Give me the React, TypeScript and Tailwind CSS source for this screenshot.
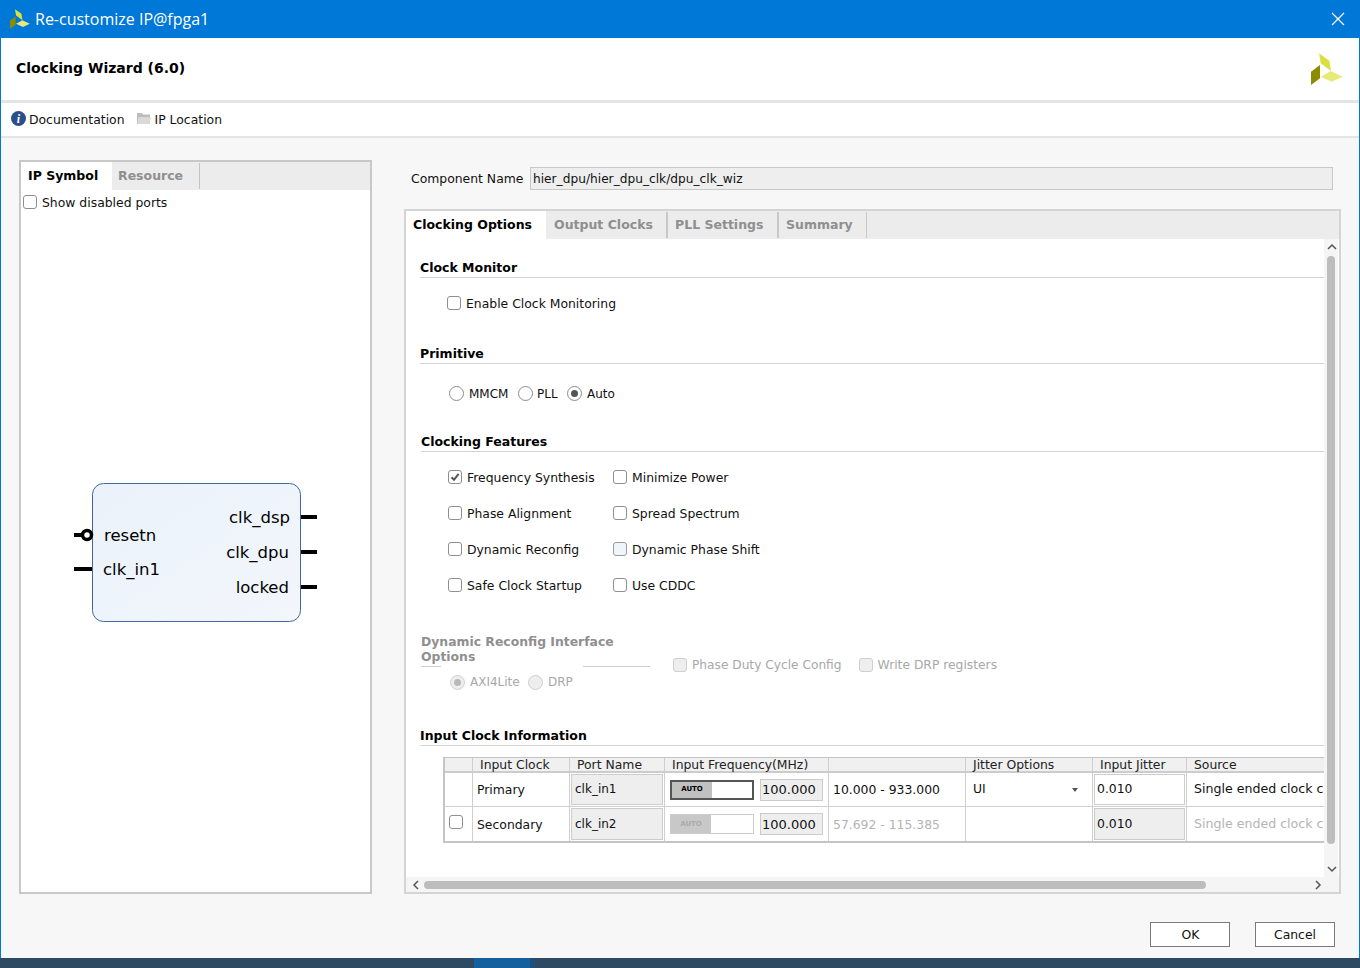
import type { ReactNode } from "react";

function XilinxLogo({ size }: { size: number }) {
  return (
    <svg width={size} height={size} viewBox="0 0 32 32" className="shrink-0">
      <polygon points="8,0.3 18.3,7.7 20,18 9.7,10.3" fill="#dbe040" />
      <polygon points="0,18.7 9,12 9,25.3 0,32" fill="#8b8c00" />
      <polygon points="9.7,23.7 19.7,18 31.7,23.7 20.7,28.7" fill="#e6ea78" />
    </svg>
  );
}

function Check({ checked, disabled, tint }: { checked?: boolean; disabled?: boolean; tint?: boolean }) {
  return (
    <span
      className={`flex h-[14px] w-[14px] shrink-0 items-center justify-center rounded-[3px] border-[1.5px] ${
        disabled ? "border-[#cfcfcf] bg-[#eeeeee]" : tint ? "border-[#9a9a9a] bg-[#f0f5fb]" : "border-[#8f8f8f] bg-white"
      }`}
    >
      {checked && (
        <svg width="10" height="10" viewBox="0 0 10 10">
          <path d="M1.5 5.2 L4 7.8 L8.6 1.8" fill="none" stroke="#555" strokeWidth="2" />
        </svg>
      )}
    </span>
  );
}

function Radio({ checked, disabled }: { checked?: boolean; disabled?: boolean }) {
  return (
    <span
      className={`flex h-[15px] w-[15px] shrink-0 items-center justify-center rounded-full border ${
        disabled ? "border-[#cfcfcf] bg-[#eeeeee]" : "border-[#8c8c8c] bg-white"
      }`}
    >
      {checked && <span className={`h-[7px] w-[7px] rounded-full ${disabled ? "bg-[#b8b8b8]" : "bg-[#555555]"}`} />}
    </span>
  );
}

function Heading({ children }: { children: ReactNode }) {
  return <div className="h-5 border-b border-[#d4d4d4] text-[12.5px] leading-[20px] font-bold text-black">{children}</div>;
}

function CheckRow({ label, checked, tint }: { label: string; checked?: boolean; tint?: boolean }) {
  return (
    <div className="flex h-9 items-center gap-[5px]">
      <Check checked={checked} tint={tint} />
      <span className="pt-[2px]">{label}</span>
    </div>
  );
}

function AutoToggle({ disabled }: { disabled?: boolean }) {
  return (
    <div className={`flex h-5 w-[84px] ${disabled ? "border border-[#cccccc]" : "border-2 border-[#555555]"} bg-white`}>
      <div
        className={`flex w-10 items-center justify-center text-[7px] font-bold ${
          disabled ? "bg-[#c8c8c8] text-[#aaaaaa]" : "bg-[#c0c0c0] text-black"
        }`}
      >
        AUTO
      </div>
    </div>
  );
}

function ReadBox({ children, className }: { children: ReactNode; className: string }) {
  return <div className={`border border-[#cccccc] ${className}`}>{children}</div>;
}

function Chevron({ d, className }: { d: string; className?: string }) {
  return (
    <svg width="10" height="10" viewBox="0 0 10 10" className={className}>
      <path d={d} fill="none" stroke="#555" strokeWidth="1.5" />
    </svg>
  );
}

const cell = "flex items-center border-r border-[#cfcfcf]";
const head = "flex items-center border-r border-[#cfcfcf] bg-[#f0f0f0] border-b-2 border-b-[#cccccc] pt-[2px] text-[#222]";
const rowLine = "border-b border-b-[#cfcfcf]";

function ClockTable() {
  return (
    <div className="ml-[23px] mt-[11px] overflow-hidden border-t border-l-2 border-b-2 border-[#c4c4c4]">
      <div className="grid w-[1000px] grid-cols-[28px_97px_95px_164px_137px_127px_94px_258px] grid-rows-[15px_34px_34px]">
        <div className={head} />
        <div className={`${head} pl-[7px]`}>Input Clock</div>
        <div className={`${head} pl-[7px]`}>Port Name</div>
        <div className={`${head} pl-[7px]`}>Input Frequency(MHz)</div>
        <div className={head} />
        <div className={`${head} pl-[7px]`}>Jitter Options</div>
        <div className={`${head} pl-[7px]`}>Input Jitter</div>
        <div className={`${head} pl-[7px]`}>Source</div>

        <div className={`${cell} ${rowLine}`} />
        <div className={`${cell} ${rowLine} pl-1 pt-[2px]`}>Primary</div>
        <div className={`${cell} ${rowLine} p-px`}>
          <ReadBox className="flex h-full w-full items-start bg-[#eeeeee] pl-[3px] pt-[8px] text-[12px]">clk_in1</ReadBox>
        </div>
        <div className={`${cell} ${rowLine} gap-[6px] pl-[5px]`}>
          <AutoToggle />
          <ReadBox className="flex h-[22px] w-[63px] items-center bg-[#eeeeee] pl-[1px] text-[13px]">100.000</ReadBox>
        </div>
        <div className={`${cell} ${rowLine} pl-[4px] pt-[2px]`}>10.000 - 933.000</div>
        <div className={`${cell} ${rowLine} justify-between pl-[7px] pr-[14px]`}>
          <span>UI</span>
          <span className="h-0 w-0 border-x-[3px] border-t-[4px] border-x-transparent border-t-[#555555]" />
        </div>
        <div className={`${cell} ${rowLine} p-px`}>
          <ReadBox className="flex h-full w-full items-center bg-white pl-[2px]">0.010</ReadBox>
        </div>
        <div className={`${cell} ${rowLine} pl-[7px] text-[12.6px] whitespace-nowrap`}>Single ended clock capable pin</div>

        <div className={`${cell} items-start pl-1 pt-[8px]`}>
          <Check />
        </div>
        <div className={`${cell} pl-1 pt-[2px]`}>Secondary</div>
        <div className={`${cell} p-px`}>
          <ReadBox className="flex h-full w-full items-start bg-[#eeeeee] pl-[3px] pt-[9px] text-[12px]">clk_in2</ReadBox>
        </div>
        <div className={`${cell} gap-[6px] pl-[5px]`}>
          <AutoToggle disabled />
          <ReadBox className="flex h-[22px] w-[63px] items-center bg-[#eeeeee] pl-[1px] text-[13px]">100.000</ReadBox>
        </div>
        <div className={`${cell} pl-[4px] pt-[2px] text-[#b4b4b4]`}>57.692 - 115.385</div>
        <div className={cell} />
        <div className={`${cell} p-px`}>
          <ReadBox className="flex h-full w-full items-center bg-[#eeeeee] pl-[2px]">0.010</ReadBox>
        </div>
        <div className={`${cell} pl-[7px] text-[12.6px] whitespace-nowrap text-[#b4b4b4]`}>Single ended clock capable pin</div>
      </div>
    </div>
  );
}

function ClockingOptions() {
  return (
    <div className="h-[638px] w-[918px] overflow-hidden pl-[14px] pt-[19px] text-[12.4px] leading-none text-[#111]">
      <Heading>Clock Monitor</Heading>
      <div className="ml-[27px] mt-[7px] flex h-9 items-center gap-[5px]">
        <Check />
        <span className="pt-[2px]">Enable Clock Monitoring</span>
      </div>
      <div className="mt-[23px]">
        <Heading>Primitive</Heading>
      </div>
      <div className="ml-[29px] mt-[14px] flex h-[30px] items-center text-[12px]">
        <Radio />
        <span className="ml-[5px] w-[38px] pt-[2px]">MMCM</span>
        <span className="ml-[11px]">
          <Radio />
        </span>
        <span className="ml-[4px] w-[20px] pt-[2px]">PLL</span>
        <span className="ml-[10px]">
          <Radio checked />
        </span>
        <span className="ml-[5px] pt-[2px]">Auto</span>
      </div>
      <div className="ml-px mt-[24px]">
        <Heading>Clocking Features</Heading>
      </div>
      <div className="ml-[28px] mt-[7px] grid w-[340px] grid-cols-[165px_175px]">
        <CheckRow label="Frequency Synthesis" checked />
        <CheckRow label="Minimize Power" />
        <CheckRow label="Phase Alignment" />
        <CheckRow label="Spread Spectrum" />
        <CheckRow label="Dynamic Reconfig" />
        <CheckRow label="Dynamic Phase Shift" tint />
        <CheckRow label="Safe Clock Startup" />
        <CheckRow label="Use CDDC" />
      </div>
      <div className="ml-px mt-[31px] flex items-end text-[#a8a8a8]">
        <div className="w-[229px]">
          <div className="text-[12.4px] leading-[15px] font-bold text-[#8f8f8f]">
            Dynamic Reconfig Interface
            <br />
            Options
          </div>
          <div className="mt-[2px] flex justify-between">
            <span className="h-px w-5 bg-[#cfcfcf]" />
            <span className="h-px w-[67px] bg-[#cfcfcf]" />
          </div>
        </div>
        <div className="ml-[23px] flex h-4 translate-y-[6px] items-center gap-[5px]">
          <Check disabled />
          <span className="text-[12.2px]">Phase Duty Cycle Config</span>
        </div>
        <div className="ml-[17px] flex h-4 translate-y-[6px] items-center gap-[5px]">
          <Check disabled />
          <span className="text-[12.3px]">Write DRP registers</span>
        </div>
      </div>
      <div className="ml-[30px] mt-[7px] flex h-4 items-center text-[12px] text-[#a8a8a8]">
        <Radio checked disabled />
        <span className="ml-[5px] w-[48px]">AXI4Lite</span>
        <span className="ml-[10px]">
          <Radio disabled />
        </span>
        <span className="ml-[5px]">DRP</span>
      </div>
      <div className="mt-[36px]">
        <Heading>Input Clock Information</Heading>
      </div>
      <ClockTable />
    </div>
  );
}

function IpSymbol() {
  const textStyle = "[font-family:'DejaVu_Sans',sans-serif] text-[16.5px] fill-black";
  return (
    <svg width="260" height="150" viewBox="70 480 260 150" className="ml-[49px] mt-[271px]">
      <defs>
        <linearGradient id="symbolFill" x1="0" y1="0" x2="1" y2="1">
          <stop offset="0" stopColor="#eaf2fb" />
          <stop offset="1" stopColor="#f3f6fb" />
        </linearGradient>
      </defs>
      <rect x="92.5" y="483.5" width="208" height="138" rx="11" fill="url(#symbolFill)" stroke="#3f67a8" />
      <rect x="74" y="533" width="14" height="4" fill="#000" />
      <circle cx="87" cy="535" r="4.5" fill="#fff" stroke="#000" strokeWidth="3.5" />
      <rect x="74" y="567" width="18" height="4" fill="#000" />
      <rect x="301" y="515" width="16" height="4" fill="#000" />
      <rect x="301" y="550" width="16" height="4" fill="#000" />
      <rect x="301" y="585" width="16" height="4" fill="#000" />
      <text x="104" y="541" className={textStyle}>resetn</text>
      <text x="103" y="575" className={textStyle}>clk_in1</text>
      <text x="290" y="523" textAnchor="end" className={textStyle}>clk_dsp</text>
      <text x="289" y="558" textAnchor="end" className={textStyle}>clk_dpu</text>
      <text x="289" y="593" textAnchor="end" className={textStyle}>locked</text>
    </svg>
  );
}

export default function App() {
  return (
    <div className="flex h-[968px] w-[1360px] flex-col overflow-hidden bg-[#0078d7] [font-family:'DejaVu_Sans',sans-serif] text-[12.4px] text-[#111]">
      <div className="flex h-[38px] shrink-0 items-center bg-[#0078d7] pl-[10px] pr-[15px] text-white">
        <XilinxLogo size={20} />
        <span className="ml-[5px] [font-family:'Open_Sans',sans-serif] text-[16px]">Re-customize IP@fpga1</span>
        <svg width="14" height="14" viewBox="0 0 14 14" className="ml-auto">
          <path d="M1 1 L13 13 M13 1 L1 13" stroke="#fff" strokeWidth="1.2" />
        </svg>
      </div>

      <div className="mx-px flex min-h-0 flex-1 flex-col bg-[#f7f7f7]">
        <div className="flex h-[65px] shrink-0 items-center justify-between border-b-[3px] border-[#e5e5e5] bg-white pl-[15px] pr-[16px]">
          <span className="pb-[2px] text-[14px] font-bold text-black">Clocking Wizard (6.0)</span>
          <XilinxLogo size={32} />
        </div>
        <div className="flex h-[35px] shrink-0 items-center border-b-2 border-[#e5e5e5] bg-white pl-[10px]">
          <span className="-mt-[2px] flex h-[15px] w-[15px] items-center justify-center rounded-full bg-[#2b4f8c] font-['Liberation_Serif'] text-[12px] font-bold text-white italic">
            i
          </span>
          <span className="ml-[3px] pt-[2px]">Documentation</span>
          <svg width="14" height="13" viewBox="0 0 14 13" className="-mt-[2px] ml-3">
            <path d="M0 1 H5 L6 2.5 H13 V12 H0 Z" fill="#bdbdbd" />
            <path d="M1.5 5 H14 L12.5 12 H0.5 Z" fill="#d9d9d9" />
          </svg>
          <span className="ml-1 pt-[2px]">IP Location</span>
        </div>

        <div className="flex min-h-0 flex-1 pl-[18px] pt-[22px]">
          <div className="h-[734px] w-[353px] shrink-0 border-2 border-[#c8c8c8] bg-white">
            <div className="flex h-7 bg-[#ececec] text-[12.5px] font-bold">
              <div className="flex w-[91px] items-center bg-white pl-[7px] text-black">IP Symbol</div>
              <div className="my-[1px] flex w-[88px] items-center border-r border-[#c4c4c4] pl-[6px] text-[#8f8f8f]">Resource</div>
            </div>
            <div className="ml-[2px] mt-[4px] flex h-[15px] items-center gap-[5px]">
              <Check />
              <span className="pt-[4px]">Show disabled ports</span>
            </div>
            <IpSymbol />
          </div>

          <div className="ml-8 w-[937px] shrink-0">
            <div className="ml-[7px] mt-[7px] flex h-[23px] items-center">
              <span className="w-[119px] pt-[2px]">Component Name</span>
              <div className="flex h-[23px] w-[803px] items-center border border-[#c8c8c8] bg-[#eeeeee] pl-[2px] pt-[2px] text-[12.2px]">hier_dpu/hier_dpu_clk/dpu_clk_wiz</div>
            </div>
            <div className="mt-[19px] h-[685px] border-2 border-[#d4d4d4] bg-white">
              <div className="flex h-7 bg-[#ececec] text-[12.5px] font-bold text-[#8f8f8f]">
                <div className="flex w-[140px] items-center bg-white pl-[7px] text-black">Clocking Options</div>
                <div className="my-[1px] flex w-[122px] items-center border-r-2 border-[#c8c8c8] pl-2">Output Clocks</div>
                <div className="my-[1px] flex w-[111px] items-center border-r-2 border-[#c8c8c8] pl-[7px]">PLL Settings</div>
                <div className="my-[1px] flex w-[88px] items-center border-r border-[#c8c8c8] pl-[7px]">Summary</div>
              </div>
              <div className="flex">
                <ClockingOptions />
                <div className="flex h-[638px] w-[14px] flex-col items-center justify-between bg-[#f5f5f5] py-[3px]">
                  <Chevron d="M1 7 L5 3 L9 7" className="ml-px" />
                  <div className="mb-[20px] mt-[4px] w-2 flex-1 rounded bg-[#bdbdbd]" />
                  <Chevron d="M1 3 L5 7 L9 3" className="ml-px" />
                </div>
              </div>
              <div className="flex h-[15px] items-center bg-[#f5f5f5] pl-[5px] pr-[16px]">
                <Chevron d="M7 1 L3 5 L7 9" />
                <div className="ml-[3px] h-2 w-[782px] rounded bg-[#bdbdbd]" />
                <span className="ml-auto">
                  <Chevron d="M3 1 L7 5 L3 9" />
                </span>
              </div>
            </div>
          </div>
        </div>

        <div className="flex h-[64px] shrink-0 items-start justify-end gap-[25px] pr-[24px] pt-[28px]">
          <button className="h-[25px] w-20 border border-[#7a7a7a] bg-white pl-px pt-[2px]">OK</button>
          <button className="h-[25px] w-20 border border-[#7a7a7a] bg-white pt-[2px]">Cancel</button>
        </div>
      </div>

      <div className="flex h-[10px] shrink-0 bg-[#2e4a62]">
        <div className="ml-[474px] w-[56px] bg-[#14609f]" />
        <div className="w-[5px] bg-[#1d4f7d]" />
      </div>
    </div>
  );
}
